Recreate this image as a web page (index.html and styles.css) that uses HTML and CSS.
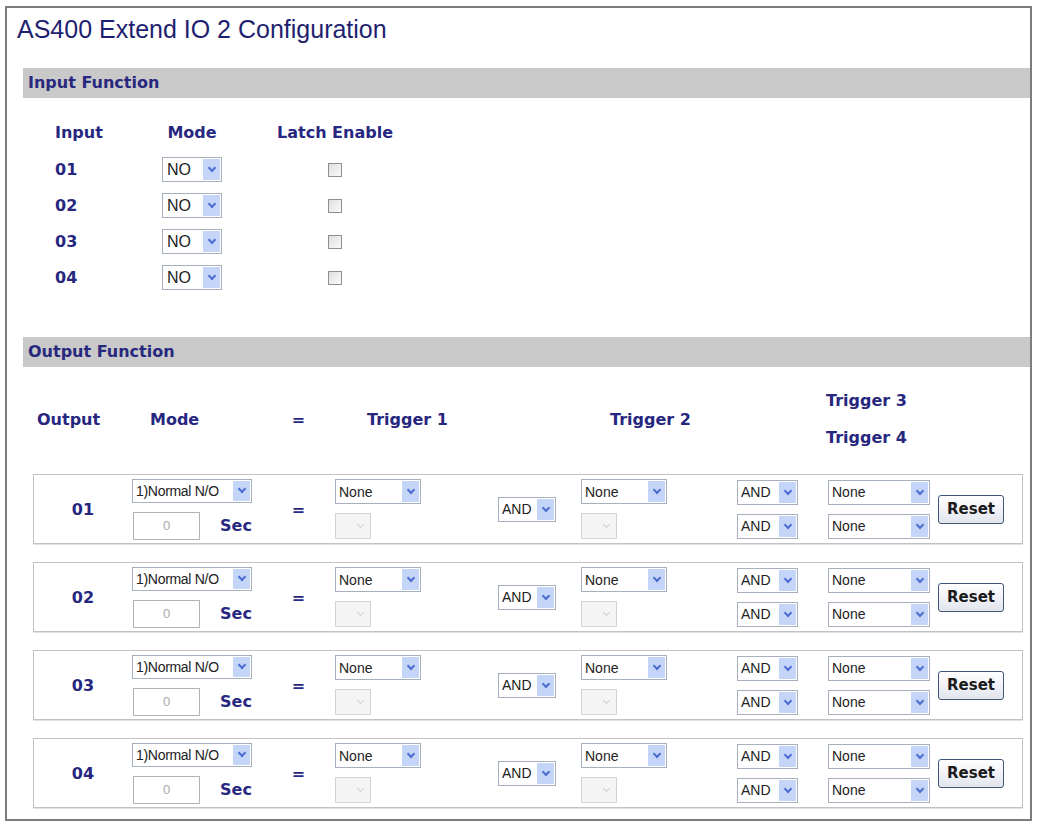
FILE: index.html
```html
<!DOCTYPE html>
<html lang="en">
<head>
  <meta charset="UTF-8" />
  <title>AS400 Extend IO 2 Configuration</title>
  <link rel="stylesheet" href="styles.css">
</head>
<body>
  <div class="page">
    <h1 class="title">AS400 Extend IO 2 Configuration</h1>

    <!-- input section -->
    <div class="bar">Input Function</div>
    <div class="in-table">
      <div>Input</div><div class="c">Mode</div><div class="c">Latch Enable</div>

      <div>01</div>
      <div class="c"><span class="sel sel-no"><select><option>NO</option><option>NC</option></select><span class="arw"></span></span></div>
      <div class="c"><input type="checkbox" class="chk"></div>

      <div>02</div>
      <div class="c"><span class="sel sel-no"><select><option>NO</option><option>NC</option></select><span class="arw"></span></span></div>
      <div class="c"><input type="checkbox" class="chk"></div>

      <div>03</div>
      <div class="c"><span class="sel sel-no"><select><option>NO</option><option>NC</option></select><span class="arw"></span></span></div>
      <div class="c"><input type="checkbox" class="chk"></div>

      <div>04</div>
      <div class="c"><span class="sel sel-no"><select><option>NO</option><option>NC</option></select><span class="arw"></span></span></div>
      <div class="c"><input type="checkbox" class="chk"></div>
    </div>

    <!-- output section -->
    <div class="bar bar-out">Output Function</div>
    <div class="out-head">
      <div class="h-out">Output</div>
      <div class="h-mode">Mode</div>
      <div class="h-eq">=</div>
      <div class="h-t1">Trigger 1</div>
      <div class="h-t2">Trigger 2</div>
      <div class="h-t3">Trigger 3</div>
      <div class="h-t4">Trigger 4</div>
    </div>

    <div class="out-row">
      <div class="num">01</div>
      <div class="stack">
        <span class="sel sel-mode"><select><option>1)Normal N/O</option></select><span class="arw"></span></span>
        <div class="delay"><input class="sec" type="text" value="0" disabled><span class="sec-lbl">Sec</span></div>
      </div>
      <div class="eq">=</div>
      <div class="stack">
        <span class="sel sel-trig"><select><option>None</option></select><span class="arw"></span></span>
        <span class="sel off"><select disabled></select><span class="arw"></span></span>
      </div>
      <div><span class="sel sel-and"><select><option>AND</option><option>OR</option></select><span class="arw"></span></span></div>
      <div class="stack">
        <span class="sel sel-trig"><select><option>None</option></select><span class="arw"></span></span>
        <span class="sel off"><select disabled></select><span class="arw"></span></span>
      </div>
      <div class="stack">
        <span class="sel sel-and2"><select><option>AND</option><option>OR</option></select><span class="arw"></span></span>
        <span class="sel sel-and2"><select><option>AND</option><option>OR</option></select><span class="arw"></span></span>
      </div>
      <div class="stack">
        <span class="sel sel-none"><select><option>None</option></select><span class="arw"></span></span>
        <span class="sel sel-none"><select><option>None</option></select><span class="arw"></span></span>
      </div>
      <div><button class="reset">Reset</button></div>
    </div>

    <div class="out-row">
      <div class="num">02</div>
      <div class="stack">
        <span class="sel sel-mode"><select><option>1)Normal N/O</option></select><span class="arw"></span></span>
        <div class="delay"><input class="sec" type="text" value="0" disabled><span class="sec-lbl">Sec</span></div>
      </div>
      <div class="eq">=</div>
      <div class="stack">
        <span class="sel sel-trig"><select><option>None</option></select><span class="arw"></span></span>
        <span class="sel off"><select disabled></select><span class="arw"></span></span>
      </div>
      <div><span class="sel sel-and"><select><option>AND</option><option>OR</option></select><span class="arw"></span></span></div>
      <div class="stack">
        <span class="sel sel-trig"><select><option>None</option></select><span class="arw"></span></span>
        <span class="sel off"><select disabled></select><span class="arw"></span></span>
      </div>
      <div class="stack">
        <span class="sel sel-and2"><select><option>AND</option><option>OR</option></select><span class="arw"></span></span>
        <span class="sel sel-and2"><select><option>AND</option><option>OR</option></select><span class="arw"></span></span>
      </div>
      <div class="stack">
        <span class="sel sel-none"><select><option>None</option></select><span class="arw"></span></span>
        <span class="sel sel-none"><select><option>None</option></select><span class="arw"></span></span>
      </div>
      <div><button class="reset">Reset</button></div>
    </div>

    <div class="out-row">
      <div class="num">03</div>
      <div class="stack">
        <span class="sel sel-mode"><select><option>1)Normal N/O</option></select><span class="arw"></span></span>
        <div class="delay"><input class="sec" type="text" value="0" disabled><span class="sec-lbl">Sec</span></div>
      </div>
      <div class="eq">=</div>
      <div class="stack">
        <span class="sel sel-trig"><select><option>None</option></select><span class="arw"></span></span>
        <span class="sel off"><select disabled></select><span class="arw"></span></span>
      </div>
      <div><span class="sel sel-and"><select><option>AND</option><option>OR</option></select><span class="arw"></span></span></div>
      <div class="stack">
        <span class="sel sel-trig"><select><option>None</option></select><span class="arw"></span></span>
        <span class="sel off"><select disabled></select><span class="arw"></span></span>
      </div>
      <div class="stack">
        <span class="sel sel-and2"><select><option>AND</option><option>OR</option></select><span class="arw"></span></span>
        <span class="sel sel-and2"><select><option>AND</option><option>OR</option></select><span class="arw"></span></span>
      </div>
      <div class="stack">
        <span class="sel sel-none"><select><option>None</option></select><span class="arw"></span></span>
        <span class="sel sel-none"><select><option>None</option></select><span class="arw"></span></span>
      </div>
      <div><button class="reset">Reset</button></div>
    </div>

    <div class="out-row">
      <div class="num">04</div>
      <div class="stack">
        <span class="sel sel-mode"><select><option>1)Normal N/O</option></select><span class="arw"></span></span>
        <div class="delay"><input class="sec" type="text" value="0" disabled><span class="sec-lbl">Sec</span></div>
      </div>
      <div class="eq">=</div>
      <div class="stack">
        <span class="sel sel-trig"><select><option>None</option></select><span class="arw"></span></span>
        <span class="sel off"><select disabled></select><span class="arw"></span></span>
      </div>
      <div><span class="sel sel-and"><select><option>AND</option><option>OR</option></select><span class="arw"></span></span></div>
      <div class="stack">
        <span class="sel sel-trig"><select><option>None</option></select><span class="arw"></span></span>
        <span class="sel off"><select disabled></select><span class="arw"></span></span>
      </div>
      <div class="stack">
        <span class="sel sel-and2"><select><option>AND</option><option>OR</option></select><span class="arw"></span></span>
        <span class="sel sel-and2"><select><option>AND</option><option>OR</option></select><span class="arw"></span></span>
      </div>
      <div class="stack">
        <span class="sel sel-none"><select><option>None</option></select><span class="arw"></span></span>
        <span class="sel sel-none"><select><option>None</option></select><span class="arw"></span></span>
      </div>
      <div><button class="reset">Reset</button></div>
    </div>
  </div>
</body>
</html>
```

FILE: styles.css
```css
body {
  margin: 0;
  background-color: #fff;
  font-family: "DejaVu Sans", Verdana, sans-serif;
  color: #27277f;
}
.page {
  margin: 6px 5px 0;
  height: 815px;
  box-sizing: border-box;
  border: 2px solid #7c7c7c;
}
.title {
  margin: 0;
  padding: 7px 0 0 10px;
  font: normal 25px/28px "Liberation Sans", Arial, sans-serif;
  color: #1f1f70;
}
.bar {
  margin: 25px 0 0 16px;
  height: 30px;
  line-height: 30px;
  padding-left: 5px;
  background-color: #c9c9c9;
  font-size: 16px;
  font-weight: bold;
  color: #28287e;
}
.bar-out {
  margin-top: 42px;
}

/* input table */
.in-table {
  display: grid;
  grid-template-columns: 80px 114px 172px;
  grid-template-rows: 38px;
  grid-auto-rows: 36px;
  align-items: center;
  margin: 15px 0 0 48px;
  font-size: 16px;
  font-weight: bold;
}
.in-table .c {
  text-align: center;
}
.chk {
  appearance: none;
  -webkit-appearance: none;
  width: 14px;
  height: 14px;
  margin: 0;
  vertical-align: middle;
  border: 1px solid #8f8f8f;
  background: linear-gradient(135deg, #dedede, #fbfbfb);
}

/* fake xp style select */
.sel {
  display: inline-flex;
  height: 25px;
  box-sizing: border-box;
  border: 1px solid #a7b0bd;
  background-color: #fff;
  vertical-align: middle;
}
.sel select {
  appearance: none;
  -webkit-appearance: none;
  flex: 1;
  min-width: 0;
  margin: 0;
  padding: 0 0 0 3px;
  border: 0;
  background: transparent;
  font: 14px "Liberation Sans", Arial, sans-serif;
  color: #222;
  outline: none;
}
.sel .arw {
  width: 17px;
  margin: 1px;
  background-color: #c5d5f8;
  display: flex;
  align-items: center;
  justify-content: center;
}
.sel .arw::after {
  content: "";
  width: 4px;
  height: 4px;
  margin-top: -3px;
  border-right: 2px solid #4d6ed0;
  border-bottom: 2px solid #4d6ed0;
  transform: rotate(45deg);
}
.sel-no {
  width: 60px;
}
.sel-no select {
  font-size: 16px;
  padding-left: 4px;
}
.sel-mode {
  width: 120px;
  height: 24px;
}
.sel-mode select {
  letter-spacing: -0.3px;
}
.sel-trig {
  width: 86px;
}
.sel-and {
  width: 58px;
}
.sel-and2 {
  width: 61px;
}
.sel-none {
  width: 102px;
}
.sel.off {
  width: 36px;
  height: 26px;
  border-color: #d2d2d2;
  background-color: #f4f4f4;
}
.sel.off .arw {
  background: none;
}
.sel.off .arw::after {
  border-color: #cfcfcf;
  border-width: 0 1px 1px 0;
}

/* output table */
.out-head,
.out-row {
  display: grid;
  grid-template-columns: 98px 130px 73px 163px 83px 156px 91px 110px 1fr;
  margin: 18px 7px 0 26px;
}
.out-head {
  margin-top: 15px;
  padding: 0 1px;
  grid-template-rows: 37px 37px;
  align-items: center;
  font-size: 16px;
  font-weight: bold;
}
.h-out { grid-area: 1 / 1 / 3 / 2; padding-left: 3px; }
.h-mode { grid-area: 1 / 2 / 3 / 3; padding-left: 18px; }
.h-eq { grid-area: 1 / 3 / 3 / 4; text-align: center; }
.h-t1 { grid-area: 1 / 4 / 3 / 5; padding-left: 32px; }
.h-t2 { grid-area: 1 / 6 / 3 / 7; padding-left: 29px; }
.h-t3 { grid-area: 1 / 8 / 2 / 10; margin-left: -2px; }
.h-t4 { grid-area: 2 / 8 / 3 / 10; margin-left: -2px; }

.out-row {
  height: 70px;
  box-sizing: border-box;
  align-items: center;
  border: 1px solid #c2c2c2;
  box-shadow: inset 1px 1px 0 #fff, 0 1px 0 #e2e2e2;
}
.num {
  text-align: center;
  font-size: 16px;
  font-weight: bold;
}
.eq {
  text-align: center;
  font-size: 16px;
  font-weight: bold;
}
.stack {
  display: flex;
  flex-direction: column;
  align-items: flex-start;
  gap: 9px;
}
.delay {
  display: flex;
  align-items: center;
  padding-left: 1px;
}
.sec {
  width: 67px;
  height: 28px;
  box-sizing: border-box;
  margin: 0;
  border: 1px solid #b3b3b3;
  background-color: #fff;
  text-align: center;
  font: 13px "Liberation Sans", Arial, sans-serif;
  color: #aaa;
}
.sec-lbl {
  margin-left: 20px;
  font-size: 16px;
  font-weight: bold;
}
.reset {
  width: 66px;
  height: 29px;
  padding: 0;
  border: 1px solid #3e5778;
  border-radius: 3px;
  background: linear-gradient(#ffffff, #e2e5ee);
  font: bold 15px "DejaVu Sans", Verdana, sans-serif;
  color: #1b1b1b;
  cursor: pointer;
}
```
